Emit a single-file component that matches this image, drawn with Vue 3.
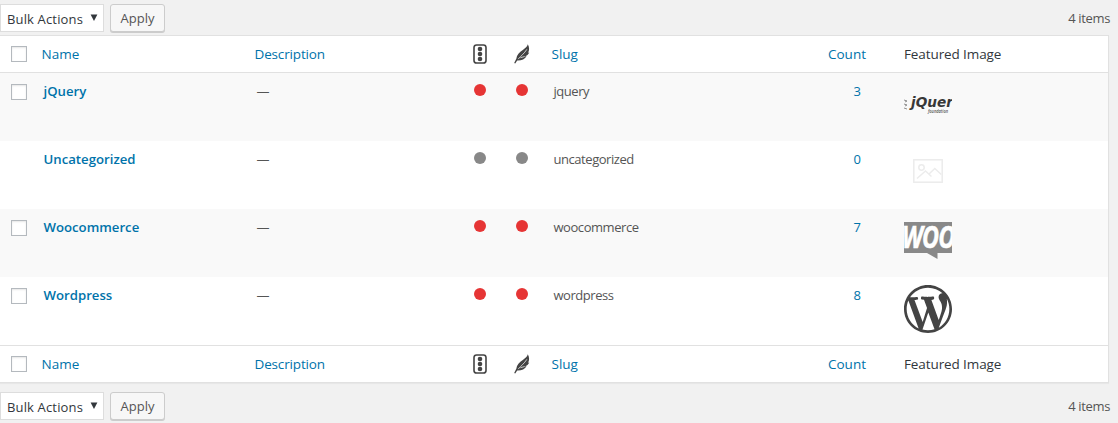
<script setup>
const rows = [
  { name: 'jQuery', slug: 'jquery', count: 3, image: 'jquery', check: true, score: 'bad' },
  { name: 'Uncategorized', slug: 'uncategorized', count: 0, image: 'empty', check: false, score: 'na' },
  { name: 'Woocommerce', slug: 'woocommerce', count: 7, image: 'woo', check: true, score: 'bad' },
  { name: 'Wordpress', slug: 'wordpress', count: 8, image: 'wp', check: true, score: 'bad' },
]
// The list is framed by matching heading and footer bands.
const bands = [
  { kind: 'head', key: 'top' },
  ...rows.map((r) => ({ kind: 'row', key: r.slug, ...r })),
  { kind: 'head', key: 'bottom' },
]
</script>

<template>
  <main class="page">
    <template v-for="pos in ['top', 'bottom']" :key="pos">
      <div class="nav" :class="pos">
        <div class="select"><span class="bulk">Bulk Actions</span>
          <svg width="8" height="8" viewBox="0 0 8 8"><path d="M.6 .5h6.8L4 7z" fill="#32373c" /></svg>
        </div>
        <button class="apply">Apply</button>
        <span class="items">4 items</span>
      </div>
      <section v-if="pos === 'top'" class="table">
        <div v-for="b in bands" :key="b.key" class="line" :class="[b.kind, b.key]">
          <template v-if="b.kind === 'head'">
            <span class="check"><i class="box"></i></span>
            <a class="name">Name</a>
            <a class="desc">Description</a>
            <span class="icon">
              <svg width="14" height="20" viewBox="0 0 14 20">
                <rect x="1" y="1" width="12" height="18" rx="2.6" fill="none" stroke="#444" stroke-width="1.6" />
                <g fill="#444"><circle cx="7" cy="5" r="2.3" /><circle cx="7" cy="10" r="2.3" /><circle cx="7" cy="15" r="2.3" /></g>
              </svg>
            </span>
            <span class="icon feather">
              <svg width="17" height="20" viewBox="0 0 17 20">
                <path d="M13.800.3C13.200 2.800 11.500 4 8.800 6 5.400 8.500 2.800 10.800 2.300 14.800L.2 19l1 .5 2-2.900c4.200.2 7.600-1.300 9.400-4.300l-1.700.1c2-.6 3.500-1.900 4.400-3.900l-1.200.2C15.500 6.500 15.500 3.200 13.800.3z" fill="#444" />
                <path d="M4.200 15.100C6.600 12.200 10.300 9.500 12.900 5.300M6.500 13.700l4.200-1.200" fill="none" stroke="#fff" stroke-width=".7" />
              </svg>
            </span>
            <a class="slug">Slug</a>
            <a class="count">Count</a>
            <span class="image">Featured Image</span>
          </template>
          <template v-else>
            <span class="check"><i v-if="b.check" class="box"></i></span>
            <a class="name">{{ b.name }}</a>
            <span class="desc">—</span>
            <span class="icon"><i class="dot" :class="b.score"></i></span>
            <span class="icon feather"><i class="dot" :class="b.score"></i></span>
            <span class="slug">{{ b.slug }}</span>
            <a class="count">{{ b.count }}</a>
            <span class="image">
              <svg v-if="b.image === 'jquery'" width="48" height="48" viewBox="0 0 48 48">
                <path d="M0 19l3 1M0 23l3 1M0 27l3 1M1 21l2-1M1 25l2-1" stroke="#777" stroke-width=".8" />
                <text x="7" y="26" class="jq" textLength="42" lengthAdjust="spacingAndGlyphs">jQuer</text>
                <text x="24" y="32" class="foundation" textLength="20" lengthAdjust="spacingAndGlyphs">foundation</text>
              </svg>
              <svg v-else-if="b.image === 'empty'" width="48" height="48" viewBox="0 0 48 48">
                <g fill="none" stroke="#ececec" stroke-width="1.5" transform="translate(0 -2)">
                  <rect x="9.800" y="12.800" width="28.400" height="22.400" />
                  <circle cx="17.500" cy="20.500" r="2.700" />
                  <path d="M13 31.500l8.500-7.500 6 5.500M25 27l5.800-5.500 6.500 6" />
                </g>
              </svg>
              <svg v-else-if="b.image === 'woo'" width="48" height="48" viewBox="0 0 48 48">
                <path d="M0 5h48v31H33.500v6L23 36H0z" fill="#898989" />
                <text transform="translate(-2 31) scale(.75 1)" class="woo">WOO</text>
              </svg>
              <svg v-else width="48" height="48" viewBox="0 0 20 20">
                <path fill="#444" d="M20 10c0-5.51-4.49-10-10-10C4.48 0 0 4.49 0 10c0 5.52 4.48 10 10 10 5.51 0 10-4.48 10-10zM7.78 15.37L4.37 6.22c.55-.02 1.17-.08 1.17-.08.5-.06.44-1.13-.06-1.11 0 0-1.45.11-2.37.11-.18 0-.37 0-.58-.01C4.12 2.69 6.87 1.11 10 1.11c2.33 0 4.45.87 6.05 2.34-.68-.11-1.65.39-1.65 1.58 0 .74.45 1.36.9 2.1.35.61.55 1.36.55 2.46 0 1.49-1.4 5-1.4 5l-3.03-8.37c.54-.02.82-.17.82-.17.5-.05.44-1.25-.06-1.22 0 0-1.44.12-2.38.12-.87 0-2.33-.12-2.33-.12-.5-.03-.56 1.2-.06 1.22l.92.08 1.26 3.41zM17.41 10c.24-.64.74-1.87.43-4.25.7 1.29 1.05 2.71 1.05 4.25 0 3.29-1.73 6.24-4.4 7.78.97-2.59 1.94-5.2 2.92-7.78zM6.1 18.09C3.12 16.65 1.11 13.53 1.11 10c0-1.3.23-2.48.72-3.59C3.25 10.3 4.67 14.2 6.1 18.09zm4.03-6.63l2.58 6.98c-.86.29-1.76.45-2.71.45-.79 0-1.57-.11-2.29-.33.81-2.38 1.62-4.74 2.42-7.1z" />
              </svg>
            </span>
          </template>
        </div>
      </section>
    </template>
  </main>
</template>

<style>
body { background: #f1f1f1; }
</style>

<style scoped>
.page {
  height: 423px;
  overflow: hidden;
  font-family: "Open Sans", "Noto Sans", sans-serif;
  font-size: 13px;
  line-height: 20px;
  color: #555;
}
.nav { display: flex; align-items: flex-start; height: 31px; padding-top: 4px; }
.nav.bottom { padding-top: 9px; }
.select {
  box-sizing: border-box;
  display: flex;
  align-items: center;
  justify-content: space-between;
  width: 104px;
  height: 28px;
  padding: 0 5px 0 6px;
  border: 1px solid #ddd;
  background: #fff;
  color: #32373c;
}
.bulk { padding-top: 2px; letter-spacing: .15px; }
.select svg { margin-top: -1px; }
.apply {
  box-sizing: border-box;
  width: 55px;
  height: 28px;
  margin: 0 0 0 6px;
  padding: 0;
  border: 1px solid #ccc;
  border-radius: 3px;
  background: #f7f7f7;
  box-shadow: 0 1px 0 #ccc;
  font: inherit;
  color: #555;
}
.items { margin: 4px 8px 0 auto; letter-spacing: -.35px; }
.table {
  box-sizing: border-box;
  width: 1109px;
  height: 348px;
  border: 1px solid #e1e1e1;
  border-left: 0;
  background: #fff;
  box-shadow: 0 1px 1px rgba(0, 0, 0, .04);
}
.line {
  display: grid;
  grid-template-columns: 41.5px 213px 218.5px 41px 37.5px 254.5px 98px 1fr;
  box-sizing: border-box;
}
.head { height: 37px; padding-top: 8px; font-size: 13.5px; color: #32373c; }
.head.top { border-bottom: 1px solid #e1e1e1; }
.head.bottom { border-top: 1px solid #e1e1e1; }
.head .desc { letter-spacing: -.15px; }
.head .image { letter-spacing: -.1px; padding-left: .5px; }
.row { height: 68px; padding-top: 8px; }
.row.jquery, .row.woocommerce { background: #f9f9f9; }
a { color: #0073aa; }
.box {
  display: block;
  box-sizing: border-box;
  width: 16px;
  height: 16px;
  margin: 2px 0 0 11px;
  border: 1px solid #b4b9be;
  background: #fff;
  box-shadow: inset 0 1px 2px rgba(0, 0, 0, .1);
}
.row .box { margin-top: 3px; }
.row .name { padding-left: 2px; font-weight: 600; font-size: 13.2px; }
.row .desc, .row .slug { padding-left: 2px; }
.row .slug { letter-spacing: -.45px; }
.icon svg { display: block; }
.feather svg { margin-left: 0; }
.dot { display: block; width: 12px; height: 12px; margin: 3px 0 0 1px; border-radius: 50%; }
.feather .dot { margin-left: 2px; }
.bad { background: #e63535; }
.na { background: #888; }
.count { justify-self: end; margin-right: 38px; }
.row .count { margin-right: 43px; }
.image { margin-left: -.5px; }
.row .image { margin-left: 0; }
.row .image svg { display: block; overflow: hidden; }
.jq { font: italic 700 14px "DejaVu Sans", sans-serif; fill: #383838; }
.foundation { font: italic 600 5px "Open Sans", sans-serif; fill: #555; }
.woo { font: italic 700 31px "Open Sans", sans-serif; fill: #fff; letter-spacing: -1px; stroke: #fff; stroke-width: .6px; }
</style>
